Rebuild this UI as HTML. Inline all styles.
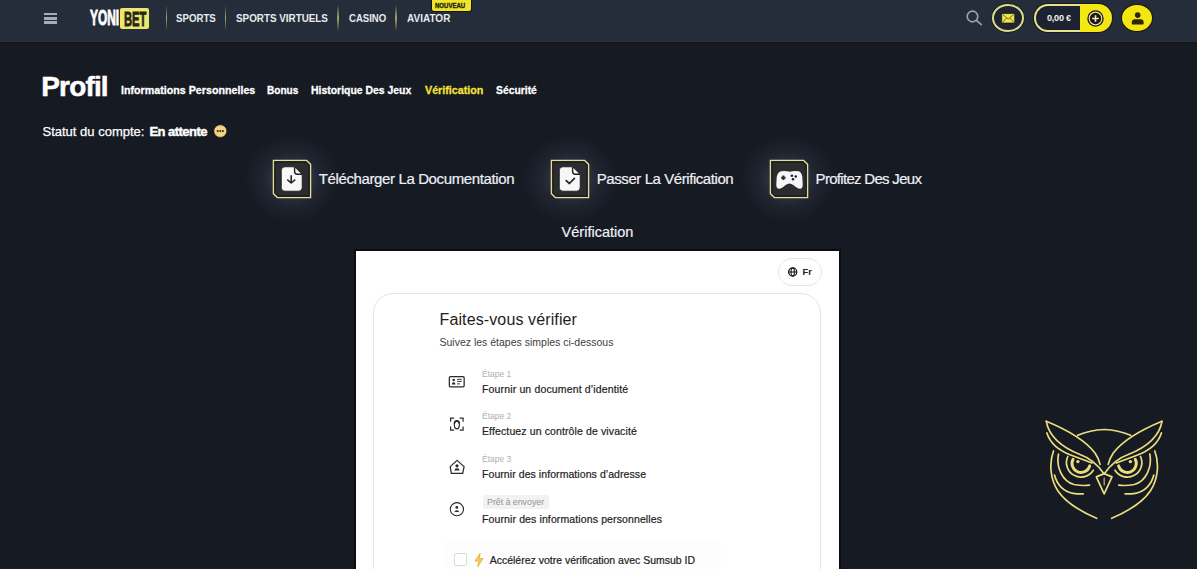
<!DOCTYPE html>
<html><head><meta charset="utf-8">
<style>
html,body{margin:0;padding:0;}
body{width:1197px;height:569px;overflow:hidden;position:relative;background:#161a23;font-family:"Liberation Sans",sans-serif;}
.a{position:absolute;white-space:nowrap;line-height:1;}
.sx{transform-origin:0 0;}
#hdr{position:absolute;left:0;top:0;width:1197px;height:40.5px;background:#252d3a;border-bottom:1.5px solid #2b2e3a;box-shadow:0 1px 1px #12151c;}
.sep{position:absolute;top:4.5px;width:1.6px;height:26px;background:linear-gradient(rgba(160,165,100,0),#a4a767 50%,rgba(160,165,100,0));}
.nav{position:absolute;top:13.3px;font-size:11px;font-weight:700;color:#e8eaf0;line-height:1;white-space:nowrap;transform-origin:0 0;}
.tab{position:absolute;top:84.8px;font-size:11.5px;font-weight:700;color:#fff;line-height:1;white-space:nowrap;transform-origin:0 0;-webkit-text-stroke:0.3px currentColor;}
.box{position:absolute;top:159px;}
.steptxt{position:absolute;top:171.4px;font-size:15px;color:#eef0f5;line-height:1;white-space:nowrap;-webkit-text-stroke:0.2px #eef0f5;}
.k{position:absolute;color:#222;font-size:10.5px;line-height:1;white-space:nowrap;-webkit-text-stroke:0.2px #222;}
.g{position:absolute;color:#b0b0b0;font-size:8.5px;line-height:1;white-space:nowrap;}
.glow{position:absolute;width:96px;height:88px;border-radius:50%;background:radial-gradient(closest-side,rgba(72,78,98,0.55) 30%,rgba(72,78,98,0.2) 60%,rgba(72,78,98,0));}
</style></head>
<body>
<div id="hdr"></div>
<!-- hamburger -->
<div class="a" style="left:44.3px;top:12.6px;width:13px;height:2.5px;background:#a7adb5;"></div>
<div class="a" style="left:44.3px;top:16.9px;width:13px;height:2.7px;background:#a7adb5;"></div>
<div class="a" style="left:44.3px;top:21.1px;width:13px;height:2.7px;background:#a7adb5;"></div>
<!-- logo -->
<div class="a sx" style="left:89.5px;top:7.5px;font-size:21.5px;font-weight:700;color:#fff;transform:scaleX(0.555);-webkit-text-stroke:0.9px #fff;">YONI</div>
<div class="a" style="left:120px;top:7.6px;width:29px;height:21.7px;background:#ece86c;border-radius:2px;"></div>
<div class="a sx" style="left:123.5px;top:8px;font-size:21px;font-weight:700;color:#25251a;transform:scaleX(0.535);-webkit-text-stroke:0.8px #25251a;">BET</div>
<!-- nav -->
<div class="sep" style="left:165.5px"></div>
<div class="nav" style="left:175.5px;transform:scaleX(0.88)">SPORTS</div>
<div class="sep" style="left:224.8px"></div>
<div class="nav" style="left:235.5px;transform:scaleX(0.895)">SPORTS VIRTUELS</div>
<div class="sep" style="left:337px"></div>
<div class="nav" style="left:348.5px;transform:scaleX(0.87)">CASINO</div>
<div class="sep" style="left:395px"></div>
<div class="nav" style="left:406.5px;transform:scaleX(0.91)">AVIATOR</div>
<div class="a" style="left:431.8px;top:0;width:38.8px;height:11px;background:#efe52a;border-radius:0 0 2px 2px;box-shadow:0 0 0 1px #15160e;"></div>
<div class="a sx" style="left:435.2px;top:2.1px;font-size:7px;font-weight:700;color:#26240c;transform:scaleX(0.86);-webkit-text-stroke:0.35px #26240c;">NOUVEAU</div>

<!-- right header -->
<svg class="a" style="left:960px;top:5px" width="30" height="26" viewBox="0 0 30 26"><circle cx="12.5" cy="11.5" r="5.3" fill="none" stroke="#9ba1ad" stroke-width="1.7"/><line x1="16.4" y1="15.4" x2="21.3" y2="19.6" stroke="#9ba1ad" stroke-width="1.8" stroke-linecap="round"/></svg>
<div class="a" style="left:992px;top:4.2px;width:28px;height:24.2px;border:2px solid #dedb8a;border-radius:50%;background:#1f2430;box-shadow:0 0 0 1px #1b1f27;"></div>
<svg class="a" style="left:1000.5px;top:13.2px" width="16" height="11" viewBox="0 0 16 11"><rect x="0.7" y="0.5" width="13" height="9.5" rx="1" fill="#eee54c" stroke="#15150c" stroke-width="0.7"/><path d="M1.6 1.4 L7.2 6 L12.8 1.4 M1.6 9.2 L5.6 5 M12.8 9.2 L8.8 5" fill="none" stroke="#6b6420" stroke-width="0.9"/></svg>

<div class="a" style="left:1033.5px;top:4.2px;width:78.3px;height:28.2px;border-radius:14.1px;background:#15181e;box-shadow:0 0 0 1px #15181e;"></div><div class="a" style="box-sizing:border-box;left:1033.5px;top:4.2px;width:56.5px;height:28.2px;border:2px solid #e6e28c;border-right:none;border-radius:14.1px 0 0 14.1px;background:#1d2230;"></div>
<div class="a" style="left:1080px;top:4.2px;width:31.8px;height:28.2px;background:#f3e812;border-radius:0 14.1px 14.1px 0;"></div>
<div class="a" style="left:1047px;top:13.8px;font-size:9px;font-weight:700;color:#f2f2f2;letter-spacing:-0.2px;">0,00 €</div>
<svg class="a" style="left:1086px;top:8.5px" width="19" height="19" viewBox="0 0 19 19"><circle cx="9.5" cy="9.5" r="8.2" fill="#1c1a0e"/><circle cx="9.5" cy="9.5" r="6.3" fill="none" stroke="#e9dfae" stroke-width="1.2"/><path d="M9.5 6.2 V12.8 M6.2 9.5 H12.8" stroke="#f3ecc9" stroke-width="1.6"/></svg>

<div class="a" style="left:1121.4px;top:3.8px;width:29.4px;height:26px;background:#f3e710;border:1.6px solid #15150e;border-radius:50%;"></div>
<svg class="a" style="left:1128px;top:10px" width="20" height="18" viewBox="0 0 20 18"><circle cx="9.7" cy="5.1" r="2.8" fill="#2a2610"/><path d="M3.8 13.8 V12.2 Q3.8 9.2 6.8 9.2 H12.6 Q15.6 9.2 15.6 12.2 V13.8 Q15.6 14.4 15 14.4 H4.4 Q3.8 14.4 3.8 13.8 Z" fill="#2a2610"/></svg>

<!-- profile -->
<div class="a" style="left:41.3px;top:72.8px;font-size:28px;font-weight:700;color:#fff;letter-spacing:-0.85px;-webkit-text-stroke:0.5px #fff;">Profil</div>
<div class="tab" style="left:120.5px;transform:scaleX(0.93)">Informations Personnelles</div>
<div class="tab" style="left:267px;transform:scaleX(0.875)">Bonus</div>
<div class="tab" style="left:311px;transform:scaleX(0.907)">Historique Des Jeux</div>
<div class="tab" style="left:424.7px;color:#f4e23a;transform:scaleX(0.93)">Vérification</div>
<div class="tab" style="left:495.5px;transform:scaleX(0.9)">Sécurité</div>

<div class="a" style="left:42.5px;top:124.8px;font-size:13px;color:#fff;-webkit-text-stroke:0.25px #fff;">Statut du compte:</div>
<div class="a" style="left:149.5px;top:124.8px;font-size:13px;font-weight:700;color:#fff;letter-spacing:-0.55px;-webkit-text-stroke:0.45px #fff;">En attente</div>
<svg class="a" style="left:213px;top:124.2px" width="15" height="15" viewBox="0 0 15 15"><ellipse cx="7.3" cy="7.1" rx="6.5" ry="6.3" fill="#f0d482" stroke="#120f08" stroke-width="0.6"/><circle cx="4.7" cy="7.1" r="1.1" fill="#4a3812"/><circle cx="7.3" cy="7.1" r="1.1" fill="#4a3812"/><circle cx="9.9" cy="7.1" r="1.1" fill="#4a3812"/></svg>

<!-- steps -->
<div class="glow" style="left:243.5px;top:135px"></div>
<div class="glow" style="left:521.5px;top:135px"></div>
<div class="glow" style="left:739.5px;top:135px"></div>

<svg class="box" style="left:272px" width="40" height="40" viewBox="0 0 40 40"><path d="M1.4 1.4 H34.6 L38.6 5.4 V38.6 H5.4 L1.4 34.6 Z" fill="#2b2c30" stroke="#e4dc94" stroke-width="1.35"/><path d="M3.1 3.1 H33.9 L36.9 6.1 V36.9 H6.1 L3.1 33.9 Z" fill="none" stroke="#1c1d20" stroke-width="1.2"/></svg>
<svg class="box" style="left:549.9px" width="40" height="40" viewBox="0 0 40 40"><path d="M1.4 1.4 H34.6 L38.6 5.4 V38.6 H5.4 L1.4 34.6 Z" fill="#2b2c30" stroke="#e4dc94" stroke-width="1.35"/><path d="M3.1 3.1 H33.9 L36.9 6.1 V36.9 H6.1 L3.1 33.9 Z" fill="none" stroke="#1c1d20" stroke-width="1.2"/></svg>
<svg class="box" style="left:768.5px" width="40" height="40" viewBox="0 0 40 40"><path d="M1.4 1.4 H34.6 L38.6 5.4 V38.6 H5.4 L1.4 34.6 Z" fill="#2b2c30" stroke="#e4dc94" stroke-width="1.35"/><path d="M3.1 3.1 H33.9 L36.9 6.1 V36.9 H6.1 L3.1 33.9 Z" fill="none" stroke="#1c1d20" stroke-width="1.2"/></svg>


<svg class="box" style="left:272px" width="40" height="40" viewBox="0 0 40 40"><path d="M12.8 7.8 H22.6 L30.2 15.4 V28.6 Q30.2 32.2 26.6 32.2 H12.9 Q9.3 32.2 9.3 28.6 V11.4 Q9.3 7.8 12.8 7.8 Z" fill="#f7f7f7" stroke="#151515" stroke-width="0.8"/><path d="M22.6 8 V12.6 Q22.6 15.3 25.3 15.3 H30" fill="none" stroke="#1e1e1e" stroke-width="1.4"/><path d="M19.2 16.2 V23.6 M15.3 20.6 L19.2 24 L23.2 20.6" fill="none" stroke="#262626" stroke-width="1.6" stroke-linejoin="round"/></svg>
<svg class="box" style="left:549.9px" width="40" height="40" viewBox="0 0 40 40"><path d="M12.8 7.8 H22.6 L30.2 15.4 V28.6 Q30.2 32.2 26.6 32.2 H12.9 Q9.3 32.2 9.3 28.6 V11.4 Q9.3 7.8 12.8 7.8 Z" fill="#f7f7f7" stroke="#151515" stroke-width="0.8"/><path d="M22.6 8 V12.6 Q22.6 15.3 25.3 15.3 H30" fill="none" stroke="#1e1e1e" stroke-width="1.4"/><path d="M16.2 21.6 L19.4 24.5 L24.4 19.3" fill="none" stroke="#262626" stroke-width="1.7" stroke-linejoin="round" stroke-linecap="round"/></svg>
<svg class="box" style="left:768.5px" width="40" height="40" viewBox="0 0 40 40"><path d="M12.4 12.2 Q16.5 11.7 20.8 12.7 Q25.1 11.7 29.4 12.2 Q32.6 12.8 33.3 18 L33.7 25.2 Q33.8 29.8 30.9 29.8 Q29 29.8 26.5 27.8 L24.3 26 Q20.5 23 16.7 26 L14.5 27.8 Q12 29.8 10.1 29.8 Q7.2 29.8 7.3 25.2 L7.7 18 Q8.6 12.8 12.4 12.2 Z" fill="#f7f7f7"/><path d="M12.2 18.8 H16.6 M14.4 16.6 V21" stroke="#2a2b2f" stroke-width="2"/><circle cx="22.9" cy="16.8" r="1.25" fill="#1d1e22"/><circle cx="26.8" cy="17.4" r="1.25" fill="#1d1e22"/><circle cx="24" cy="20.2" r="1.25" fill="#1d1e22"/></svg>

<!-- owl -->
<svg class="a" style="left:1040px;top:415px" width="130" height="110" viewBox="0 0 130 110" fill="none" stroke="#ebdc7e" stroke-width="1.7" stroke-linecap="round">
<g id="owlL">
<path d="M6.3 6.3 C25 14 45 25 55 38 Q59 44 60.1 49.3"/>
<path d="M6.3 6.3 C9 22 24 33 40 39.5 C50 43 58 50 64.15 59"/>
<path d="M6.9 17.9 C10 28 20 36 32 40.5 C40 43.5 47 46 52 48"/>
<path d="M37.7 20.3 Q50 15 64.15 14.5"/>
<path d="M13.5 36 C9 48 10 64 18 76 C26 88 42 97 56.6 103.3"/>
<path d="M18.5 39 C16 52 22 66 34 69.5 Q42 71 49.5 70.2"/>
<path d="M14.5 60 C17 70 24 77 33 78.3 Q38 79 43.2 78.8"/>
<path d="M27.8 41.5 A14.5 14.5 0 0 0 53.3 55.2"/>
<path d="M33.05 44.27 A9 9 0 1 0 49.7 50.83" stroke-width="2.9"/>
<circle cx="37.9" cy="46.6" r="1.7" fill="#ebdc7e" stroke="none"/>
</g>
<use href="#owlL" transform="translate(128.3,0) scale(-1,1)"/>
<path d="M56.3 61.9 L64.15 58.6 L72 61.9 L64.15 78.8 Z" stroke-linejoin="round"/>
<path d="M64.15 63 V70" stroke-width="1"/>
</svg>

<div class="steptxt" style="left:318.8px;letter-spacing:-0.38px">Télécharger La Documentation</div>
<div class="steptxt" style="left:596.8px;letter-spacing:-0.43px">Passer La Vérification</div>
<div class="steptxt" style="left:815.6px;letter-spacing:-0.7px">Profitez Des Jeux</div>

<div class="a" style="left:561.6px;top:224.8px;font-size:14.5px;color:#eef0f5;-webkit-text-stroke:0.2px #eef0f5;">Vérification</div>

<!-- panel -->
<div class="a" style="left:354px;top:248.5px;width:483px;height:330px;background:#fff;border:2px solid #0a0c11;"></div>
<div class="a" style="left:373px;top:293px;width:446px;height:300px;border:1px solid #e4e4e4;border-radius:20px;"></div>

<div class="a" style="left:777.7px;top:258px;width:42px;height:25.7px;border:1.2px solid #e4e4e4;border-radius:14px;"></div>
<svg class="a" style="left:787px;top:266px" width="12" height="12" viewBox="0 0 12 12"><circle cx="5.7" cy="6" r="4.1" fill="none" stroke="#1a1a1a" stroke-width="1.3"/><ellipse cx="5.7" cy="6" rx="1.7" ry="4.1" fill="none" stroke="#1a1a1a" stroke-width="1.1"/><line x1="1.6" y1="6" x2="9.8" y2="6" stroke="#1a1a1a" stroke-width="1.1"/></svg>
<div class="a" style="left:802.6px;top:268px;font-size:9.3px;font-weight:700;color:#222;">Fr</div>

<div class="a" style="left:439.5px;top:311.5px;font-size:16px;color:#1e1e1e;letter-spacing:0.12px;">Faites-vous vérifier</div>
<div class="a" style="left:439.5px;top:336.7px;font-size:10.5px;color:#3e3e3e;">Suivez les étapes simples ci-dessous</div>

<div class="g" style="left:482px;top:369.8px">Étape 1</div>
<div class="k" style="left:482px;top:384.2px;letter-spacing:0.15px">Fournir un document d’identité</div>
<div class="g" style="left:482px;top:412.1px">Étape 2</div>
<div class="k" style="left:482px;top:426.3px;letter-spacing:0.12px">Effectuez un contrôle de vivacité</div>
<div class="g" style="left:482px;top:454.8px">Étape 3</div>
<div class="k" style="left:482px;top:469.1px;letter-spacing:0.07px">Fournir des informations d’adresse</div>
<div class="a" style="left:483.3px;top:495.3px;width:66px;height:13.5px;background:#f1f2f2;border-radius:2px;"></div>
<div class="g" style="left:487px;top:497.8px;font-size:9px;letter-spacing:-0.1px;color:#959595">Prêt à envoyer</div>
<div class="k" style="left:482px;top:514.3px;letter-spacing:0.12px">Fournir des informations personnelles</div>

<!-- step icons -->
<svg class="a" style="left:447px;top:374px" width="20" height="16" viewBox="0 0 20 16"><rect x="2.35" y="2.65" width="14.8" height="10.2" rx="1.1" fill="none" stroke="#2a2a2a" stroke-width="1.25"/><circle cx="6.7" cy="6.1" r="1.25" fill="#2a2a2a"/><path d="M4.7 10.6 Q4.9 8.2 6.6 8.2 Q8.3 8.2 8.5 10.6 Z" fill="#2a2a2a"/><path d="M10.1 5.3 H14.7 M10.1 7.4 H14.7 M10.1 9.9 H13" stroke="#333" stroke-width="1"/></svg>
<svg class="a" style="left:447px;top:416px" width="20" height="18" viewBox="0 0 20 18"><path d="M3.6 5.7 V2.2 H7.1 M12.6 2.2 H16.1 V5.7 M16.1 10.6 V14.1 H12.6 M7.1 14.1 H3.6 V10.6" fill="none" stroke="#2a2a2a" stroke-width="1.2"/><path d="M7.6 11 C7 8 7 4.6 9.85 4.6 C12.7 4.6 12.7 8 12.1 11 C11.7 12.6 10.8 12.9 9.85 12.9 C8.9 12.9 8 12.6 7.6 11 Z" fill="none" stroke="#2a2a2a" stroke-width="1.1"/><path d="M7.4 7.6 Q7.7 5 9.85 5 Q12 5 12.3 7.6" fill="none" stroke="#222" stroke-width="1.5"/></svg>
<svg class="a" style="left:447px;top:458px" width="20" height="18" viewBox="0 0 20 18"><path d="M10 2.4 L17.1 8.6 L15.7 15.4 H4.3 L3.2 8.6 Z" fill="none" stroke="#2a2a2a" stroke-width="1.25" stroke-linejoin="round"/><circle cx="10" cy="7.8" r="1.6" fill="#2a2a2a"/><path d="M7.3 12.6 Q7.6 10.2 10 10.2 Q12.4 10.2 12.7 12.6 Z" fill="#2a2a2a"/></svg>
<svg class="a" style="left:447px;top:500px" width="20" height="18" viewBox="0 0 20 18"><circle cx="9.9" cy="9.2" r="6.6" fill="none" stroke="#2a2a2a" stroke-width="1.1"/><circle cx="9.8" cy="7.4" r="1.4" fill="#2a2a2a"/><path d="M7.5 12 Q7.7 10.2 9.8 10.2 Q11.9 10.2 12.1 12 Z" fill="#2a2a2a"/></svg>

<!-- sumsub row -->
<div class="a" style="left:444.5px;top:539.5px;width:276px;height:40px;background:#fdfdfd;border-radius:6px;"></div>
<div class="a" style="left:454px;top:553.3px;width:11px;height:10.5px;border:1px solid #dadada;border-radius:2px;background:#fff;"></div>
<svg class="a" style="left:472px;top:552px" width="14" height="16" viewBox="0 0 14 16"><path d="M8.2 1.2 L3 9 H6.8 L5.6 14.8 L11 6.6 H7.2 Z" fill="#f2cf5a" stroke="#e3ac25" stroke-width="0.8" stroke-linejoin="round"/></svg>
<div class="k" style="left:489.7px;top:554.7px;font-size:10.5px">Accélérez votre vérification avec Sumsub ID</div>

</body></html>
